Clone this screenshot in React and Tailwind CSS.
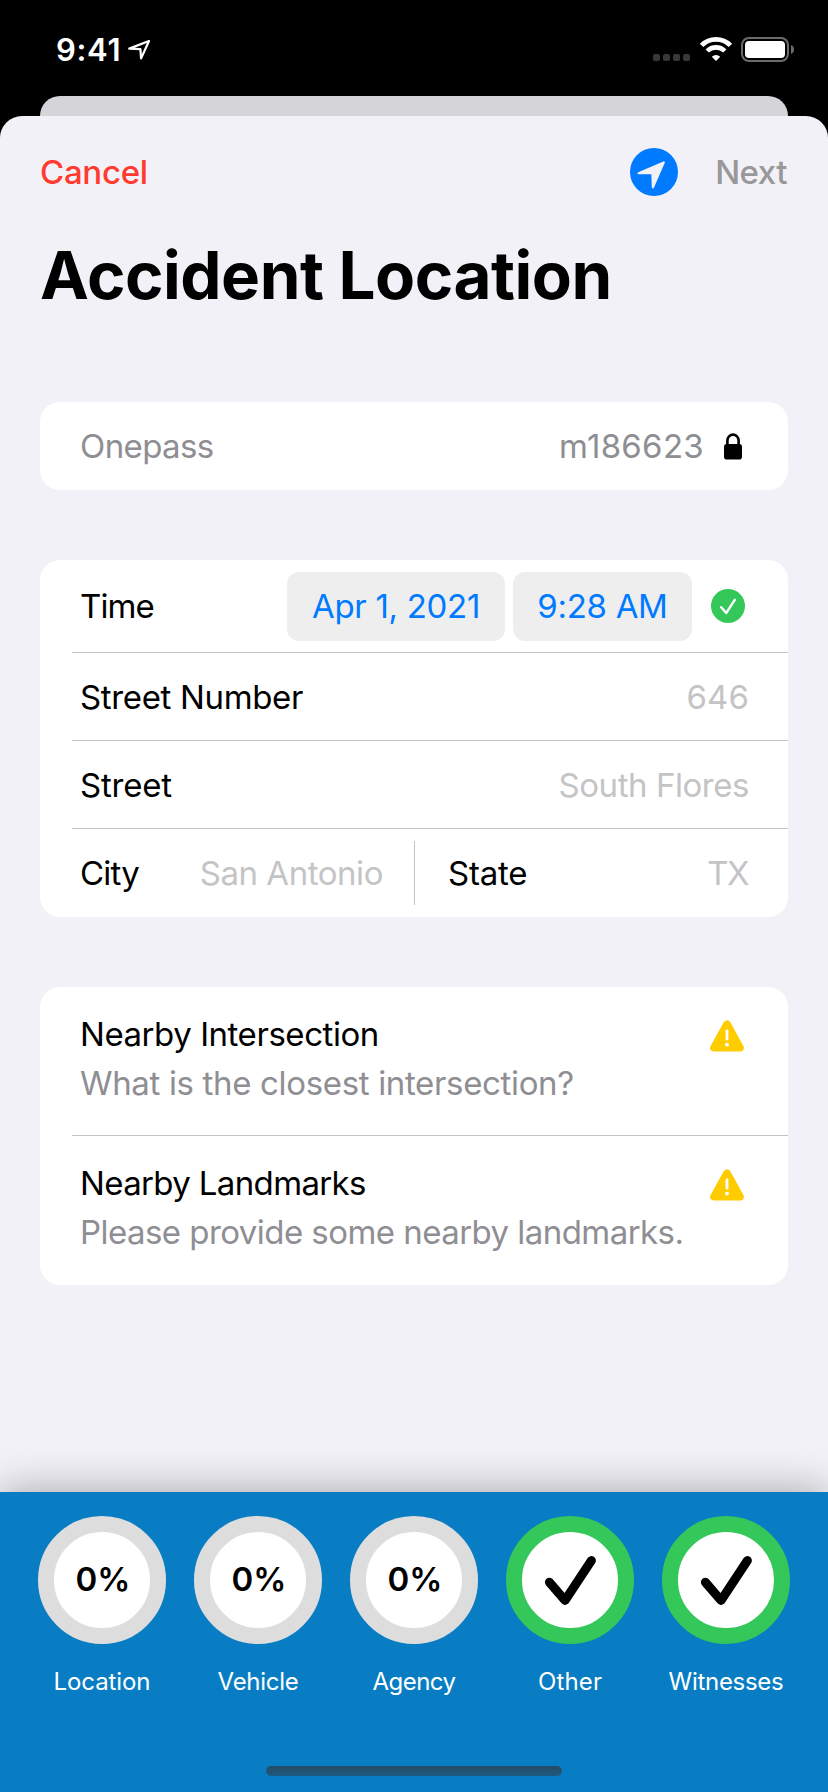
import React from 'react';

const PROGRESS = [
  { label: 'Location', tracking: 'tracking-[-0.1px]', done: false },
  { label: 'Vehicle', tracking: 'tracking-[-0.3px]', done: false },
  { label: 'Agency', tracking: 'tracking-[-0.5px]', done: false },
  { label: 'Other', tracking: 'tracking-[0.15px]', done: true },
  { label: 'Witnesses', tracking: 'tracking-[-0.3px]', done: true },
];

const StatusBar = () => (
  <div className="flex h-24 items-start justify-between pl-14 pr-[33px] text-white">
    <div className="flex items-center pt-[31px]">
      <span className="text-[31px] font-semibold leading-[38px] tracking-[0.7px]">9:41</span>
      <svg className="ml-[6px] h-6 w-6" viewBox="0 0 24 24" fill="none" stroke="currentColor" strokeWidth="2.2" strokeLinejoin="round">
        <path d="M22 3L2.2 10.6L13.4 11.2L14.1 20.4z" />
      </svg>
    </div>
    <div className="flex items-end pt-9">
      <div className="mb-[2px] flex gap-[3px]">
        {[0, 1, 2, 3].map((i) => (
          <span key={i} className="h-[7px] w-[7px] rounded-[2px] bg-[#383838]" />
        ))}
      </div>
      <svg className="ml-[9px] h-[27px] w-[34px]" viewBox="0 0 34 27" fill="none" stroke="currentColor">
        <path d="M2.6 9.4a20.3 20.3 0 0 1 28.8 0" strokeWidth="4.8" />
        <path d="M8.2 15a12.4 12.4 0 0 1 17.6 0" strokeWidth="4.6" />
        <path d="M17 25l-4.2-4.3a6.1 6.1 0 0 1 8.4 0z" fill="currentColor" stroke="none" />
      </svg>
      <svg className="ml-2 h-[27px] w-[54px]" viewBox="0 0 54 27">
        <rect x="1" y="2" width="46" height="23" rx="7" fill="none" stroke="#6b6b6b" strokeWidth="2" />
        <rect x="4" y="5" width="40" height="17" rx="4" fill="#fff" />
        <path d="M50 9c4 1.5 4 7.5 0 9z" fill="#6b6b6b" />
      </svg>
    </div>
  </div>
);

const LocationButton = () => (
  <svg className="h-12 w-12" viewBox="0 0 48 48">
    <circle cx="24" cy="24" r="24" fill="#007aff" />
    <path d="M33.8 14.4L8.6 25.2H22.4L22.9 39.3z" fill="#f2f1f7" stroke="#f2f1f7" strokeWidth="2.2" strokeLinejoin="round" />
  </svg>
);

const LockIcon = () => (
  <svg className="h-[27px] w-5" viewBox="0 0 20 27">
    <path d="M4.4 12V7.5a5.6 5.9 0 0 1 11.2 0V12" fill="none" stroke="#000" strokeWidth="2.6" />
    <rect x="1" y="11" width="18" height="15.5" rx="2.8" />
  </svg>
);

const CheckBadge = () => (
  <svg className="h-[34px] w-[34px]" viewBox="0 0 34 34" fill="none">
    <circle cx="17" cy="17" r="17" fill="#34c759" />
    <path d="M10.2 18.2L15.2 24 23.8 10.8" stroke="#fff" strokeWidth="2.4" strokeLinecap="round" strokeLinejoin="round" />
  </svg>
);

const WarningIcon = () => (
  <svg className="h-8 w-[34px]" viewBox="0 0 34 32">
    <path d="M17 4.2L3.9 27.8H30.1z" fill="#ffcc00" stroke="#ffcc00" strokeWidth="7.6" strokeLinejoin="round" />
    <path d="M17 10.8V19.2" stroke="#fff" strokeWidth="2.8" strokeLinecap="round" />
    <circle cx="17" cy="24.6" r="1.9" fill="#fff" />
  </svg>
);

const Row = ({ label, value }) => (
  <div className="flex h-[88px] items-center justify-between pl-2 pr-[39px]">
    <span>{label}</span>
    <span className="text-[#c4c4c6]">{value}</span>
  </div>
);

const Note = ({ title, hint }) => (
  <div className="flex justify-between pb-[27px] pl-2 pr-11 pt-[23px]">
    <div className="leading-[49px]">
      <div>{title}</div>
      <div className="text-[#8e8e93]">{hint}</div>
    </div>
    <div className="pt-[10px]">
      <WarningIcon />
    </div>
  </div>
);

const ProgressItem = ({ label, tracking, done }) => (
  <div className="flex w-[156px] flex-col items-center">
    <div className={`flex h-32 w-32 items-center justify-center rounded-full border-[16px] bg-white ${done ? 'border-[#34c759]' : 'border-[#dddddd]'}`}>
      {done ? (
        <svg className="h-24 w-24" viewBox="0 0 96 96" fill="none" stroke="#000" strokeWidth="9" strokeLinecap="round" strokeLinejoin="round">
          <path d="M27.4 50.2L43 68.4 69.4 28.6" />
        </svg>
      ) : (
        <span className="pl-[2px] text-[33px] font-semibold text-black">0%</span>
      )}
    </div>
    <span className={`mt-[22px] text-[24px] leading-8 text-white ${tracking}`}>{label}</span>
  </div>
);

const App = () => {
  return (
    <div className="flex h-[1792px] w-[828px] flex-col overflow-hidden bg-black font-['Inter',sans-serif] text-black">
      <StatusBar />
      <div className="mx-10 h-5 rounded-t-[20px] bg-[#d5d4d9]" />

      <div className="flex flex-1 flex-col rounded-t-[22px] bg-[#f2f1f7]">
        <div className="flex h-28 items-center justify-between pl-10 pr-[41px] text-[33px] font-[550]">
          <span className="pt-[2px] tracking-[-0.3px] text-[#ff3b30]">Cancel</span>
          <div className="flex items-center gap-[37px]">
            <LocationButton />
            <span className="pt-[2px] tracking-[-0.5px] text-[#98989a]">Next</span>
          </div>
        </div>
        <h1 className="pl-10 text-[65.5px] font-bold leading-[96px] tracking-[-0.48px]">Accident Location</h1>

        <div className="mt-[78px] flex flex-col gap-[70px] px-10 text-[33px] leading-10 tracking-[-0.45px]">
          <div className="flex h-[88px] items-center justify-between rounded-[20px] bg-white pl-10 pr-[45px] text-[#8e8e93]">
            <span className="tracking-[-0.6px]">Onepass</span>
            <div className="flex items-center gap-[19px]">
              <span className="tracking-[0.3px]">m186623</span>
              <LockIcon />
            </div>
          </div>

          <div className="h-[357px] divide-y divide-[#c3c3c6] rounded-[20px] bg-white pl-8">
            <div className="flex h-[93px] items-center justify-between pl-2 pr-[43px]">
              <span className="tracking-[-0.9px]">Time</span>
              <div className="flex items-center tracking-[-0.3px] text-[#007aff]">
                <span className="flex h-[69px] w-[218px] items-center justify-center rounded-xl bg-[#eeeeef]">Apr 1, 2021</span>
                <span className="ml-2 mr-[19px] flex h-[69px] w-[179px] items-center justify-center rounded-xl bg-[#eeeeef]">9:28 AM</span>
                <CheckBadge />
              </div>
            </div>
            <Row label={<span className="tracking-[-0.35px]">Street Number</span>} value={<span className="tracking-[0.1px]">646</span>} />
            <Row label={<span className="tracking-[-0.2px]">Street</span>} value="South Flores" />
            <div className="flex h-[88px] items-center">
              <div className="flex w-[342px] items-center justify-between pl-2 pr-[31px]">
                <span className="tracking-[-0.8px]">City</span>
                <span className="tracking-[-0.45px] text-[#c4c4c6]">San Antonio</span>
              </div>
              <div className="h-16 w-px bg-[#c3c3c6]" />
              <div className="flex flex-1 items-center justify-between pl-[33px] pr-10">
                <span className="tracking-[-0.2px]">State</span>
                <span className="tracking-[-1.5px] text-[#c4c4c6]">TX</span>
              </div>
            </div>
          </div>

          <div className="h-[298px] divide-y divide-[#c3c3c6] rounded-[20px] bg-white pl-8">
            <Note
              title="Nearby Intersection"
              hint={<span className="tracking-[-0.34px]">What is the closest intersection?</span>}
            />
            <Note
              title={<span className="tracking-[-0.64px]">Nearby Landmarks</span>}
              hint={<span className="tracking-[-0.55px]">Please provide some nearby landmarks.</span>}
            />
          </div>
        </div>
      </div>

      <div className="flex h-[300px] flex-col items-center bg-[#087dc3] pt-6 shadow-[0_0_40px_rgba(0,0,0,0.33)]">
        <div className="flex justify-center">
          {PROGRESS.map((item) => (
            <ProgressItem key={item.label} {...item} />
          ))}
        </div>
        {/* home indicator */}
        <div className="mb-4 mt-auto h-[10px] w-[296px] rounded-full bg-linear-to-b from-[#254c66] to-[#1d5a80]" />
      </div>
    </div>
  );
};

export default App;
